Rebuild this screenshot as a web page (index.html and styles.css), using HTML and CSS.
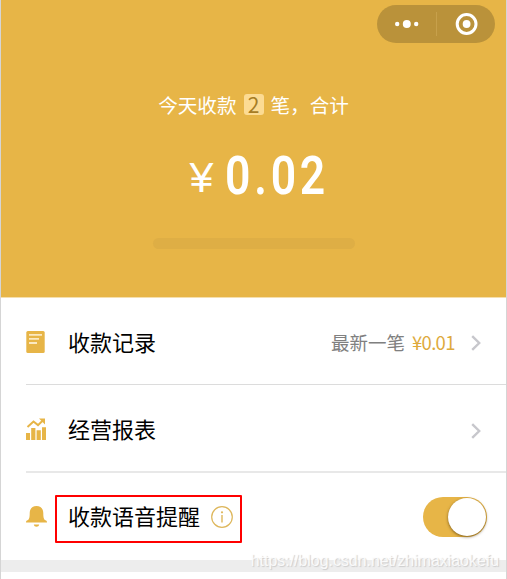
FILE: index.html
```html
<!DOCTYPE html>
<html lang="zh-CN">
<head>
  <meta charset="UTF-8" />
  <title>收款小账本</title>
  <meta name="viewport" content="width=device-width, initial-scale=1.0" />
  <link rel="stylesheet" href="styles.css">
</head>
<body>

<div class="page">
  <div class="summary">
    <div class="capsule">
      <svg class="capsule-icons" width="118" height="38" viewBox="0 0 118 38">
        <g fill="#fff">
          <circle cx="20.2" cy="19" r="2.2" />
          <circle cx="29.8" cy="19" r="4" />
          <circle cx="39.2" cy="19" r="2.2" />
          <circle cx="89.6" cy="19" r="3.9" />
        </g>
        <path d="M59.5 7v24" stroke="#c7a04b" />
        <circle cx="89.6" cy="19" r="9.4" fill="none" stroke="#fff" stroke-width="3" />
      </svg>
    </div>
    <div class="today">今天收款<span class="count">2</span>笔，合计</div>
    <div class="amount">
      <span class="yen">¥</span>
      <span class="number">0.02</span>
    </div>
    <div class="progress"></div>
  </div>

  <div class="row">
    <svg class="icon" width="22" height="24" viewBox="0 0 22 24">
      <rect x="0.3" y="1" width="18.4" height="22" rx="1.5" fill="#e7b547" />
      <path d="M3 4.8h13M3 8.9h10M3 13h8" stroke="#fbe9c2" stroke-width="1.8" />
    </svg>
    <span class="label">收款记录</span>
    <span class="latest">最新一笔</span>
    <span class="price">¥0.01</span>
    <svg class="arrow" width="10" height="16" viewBox="0 0 10 16">
      <path d="M1.2 1.2L8.2 8l-7 6.8" fill="none" stroke="#c7c7cc" stroke-width="2.4" />
    </svg>
  </div>

  <div class="row report">
    <svg class="icon" width="22" height="24" viewBox="0 0 22 24">
      <path d="M0 16h4v7H0zM5.2 11h4.2v12H5.2zM10.6 13.2h4.2V23h-4.2zM16 10.2h4V23h-4z" fill="#e7b547" />
      <path d="M1.5 10L7.5 4.5l4.500 3.600 5.600-5.400" fill="none" stroke="#e7b547" stroke-width="2" />
      <path d="M13 1.500H19v6z" fill="#e7b547" />
    </svg>
    <span class="label">经营报表</span>
    <svg class="arrow" width="10" height="16" viewBox="0 0 10 16">
      <path d="M1.2 1.2L8.2 8l-7 6.8" fill="none" stroke="#c7c7cc" stroke-width="2.4" />
    </svg>
  </div>

  <div class="row voice">
    <svg class="icon" width="22" height="24" viewBox="0 0 22 24">
      <path d="M10.5 1c4.3 0 6.8 3 6.8 7.2 0 4.4.5 6.1 2.2 7.1.9.5 1.5.8 1.5 2.2H0c0-1.4.6-1.7 1.5-2.2 1.7-1 2.2-2.7 2.2-7.1C3.7 4 6.2 1 10.5 1z" fill="#e7b547" />
      <path d="M7.8 19.6h5.4c-.3 1.5-1.3 2.2-2.7 2.2s-2.4-.7-2.7-2.2z" fill="#e7b547" />
    </svg>
    <div class="marked">
      <span class="marked-text">收款语音提醒</span>
      <svg class="info" width="22" height="22" viewBox="0 0 22 22">
        <circle cx="11" cy="11" r="10.3" fill="none" stroke="#deb75c" stroke-width="1.2" />
        <circle cx="11" cy="6.3" r="1.1" fill="#deb75c" />
        <path d="M11 9v7.5" stroke="#deb75c" stroke-width="1.4" />
      </svg>
    </div>
    <div class="switch"><div class="knob"></div></div>
  </div>

  <div class="band"></div>
  <div class="watermark">https://blog.csdn.net/zhimaxiaokefu</div>
</div>

</body>
</html>
```

FILE: styles.css
```css
* {
  box-sizing: border-box;
}

body {
  margin: 0;
  font-family: "Noto Sans CJK SC", sans-serif;
  background: #fff;
  color: #000;
}

.page {
  position: relative;
  height: 579px;
  overflow: hidden;
  border-left: 1px solid #d5d5d5;
  border-right: 1px solid #d5d5d5;
}

.summary {
  display: flex;
  flex-direction: column;
  align-items: center;
  height: 298px;
  margin: 0 -1px;
  padding-top: 5px;
  background: #e7b547;
  border-left: 1px solid #c9a353;
  border-right: 1px solid #c9a353;
  border-bottom: 1px solid #f5dfae;
  color: #fff;
}

.capsule {
  align-self: flex-end;
  width: 118px;
  height: 38px;
  margin-right: 11px;
  border-radius: 19px;
  background: #ba923a;
}

.capsule-icons {
  display: block;
}

.today {
  display: flex;
  align-items: center;
  height: 24px;
  margin-top: 49px;
  font-size: 19.6px;
}

.count {
  width: 20px;
  height: 21px;
  margin: 0 7px;
  border-radius: 3px;
  background: #fcdb93;
  color: #a67c24;
  font-size: 21px;
  line-height: 20px;
  text-align: center;
}

.amount {
  display: flex;
  align-items: center;
  width: 128px;
  height: 60px;
  margin-top: 30px;
}

.yen {
  flex: none;
  width: 35px;
  padding-top: 2px;
  font-family: "Liberation Sans", sans-serif;
  font-size: 43px;
  line-height: 60px;
}

.number {
  font-family: Roboto, sans-serif;
  font-size: 53px;
  font-weight: 600;
  line-height: 60px;
  letter-spacing: 4.5px;
  transform: scaleX(0.84);
  transform-origin: left;
}

.progress {
  width: 202px;
  height: 11px;
  margin-top: 32px;
  border-radius: 6px;
  background: #deae45;
}

.row {
  display: flex;
  align-items: center;
  height: 87px;
  margin-left: 25px;
  padding: 4px 25px 0 0;
  border-bottom: 1px solid #dcdcdc;
}

.report {
  height: 88px;
  border-bottom: 2px solid #e8e8e8;
}

.report .arrow {
  margin-top: 2px;
}

.voice {
  height: 87px;
  padding: 2px 19px 0 0;
  border-bottom: none;
}

.icon {
  flex: none;
  margin-top: -3px;
}

.voice .icon {
  margin-top: -1px;
}

.label {
  margin: -4px auto 0 20px;
  font-size: 22px;
}

.latest {
  margin: -2px 7px 0 0;
  color: #808080;
  font-size: 18.5px;
}

.price {
  width: 43px;
  margin: -2px 16px 0 0;
  color: #deaa3c;
  font-size: 18.5px;
  letter-spacing: -0.7px;
}

.arrow {
  flex: none;
}

.marked {
  display: flex;
  align-items: center;
  gap: 11px;
  width: 187px;
  height: 48px;
  margin: 2px auto 0 7px;
  padding-left: 11px;
  border: 2px solid #f00;
  border-radius: 1px;
  font-size: 22px;
}

.marked-text {
  margin-top: -7px;
}

.info {
  margin-top: -4px;
}

.switch {
  display: flex;
  justify-content: flex-end;
  width: 64px;
  height: 40px;
  margin-top: -2px;
  padding: 1px;
  border-radius: 20px;
  background: #e7b547;
}

.knob {
  width: 38px;
  height: 38px;
  border-radius: 50%;
  background: #fff;
  box-shadow: 0 1px 3px rgba(70, 45, 0, 0.65);
}

.band {
  height: 12px;
  background: #ededed;
}

.watermark {
  position: absolute;
  right: 7px;
  bottom: 8px;
  color: rgba(255, 255, 255, 0.85);
  font-family: "Liberation Sans", sans-serif;
  font-size: 15.9px;
  line-height: 20px;
  text-shadow: 1px 1px 1px #ccc;
}
```
